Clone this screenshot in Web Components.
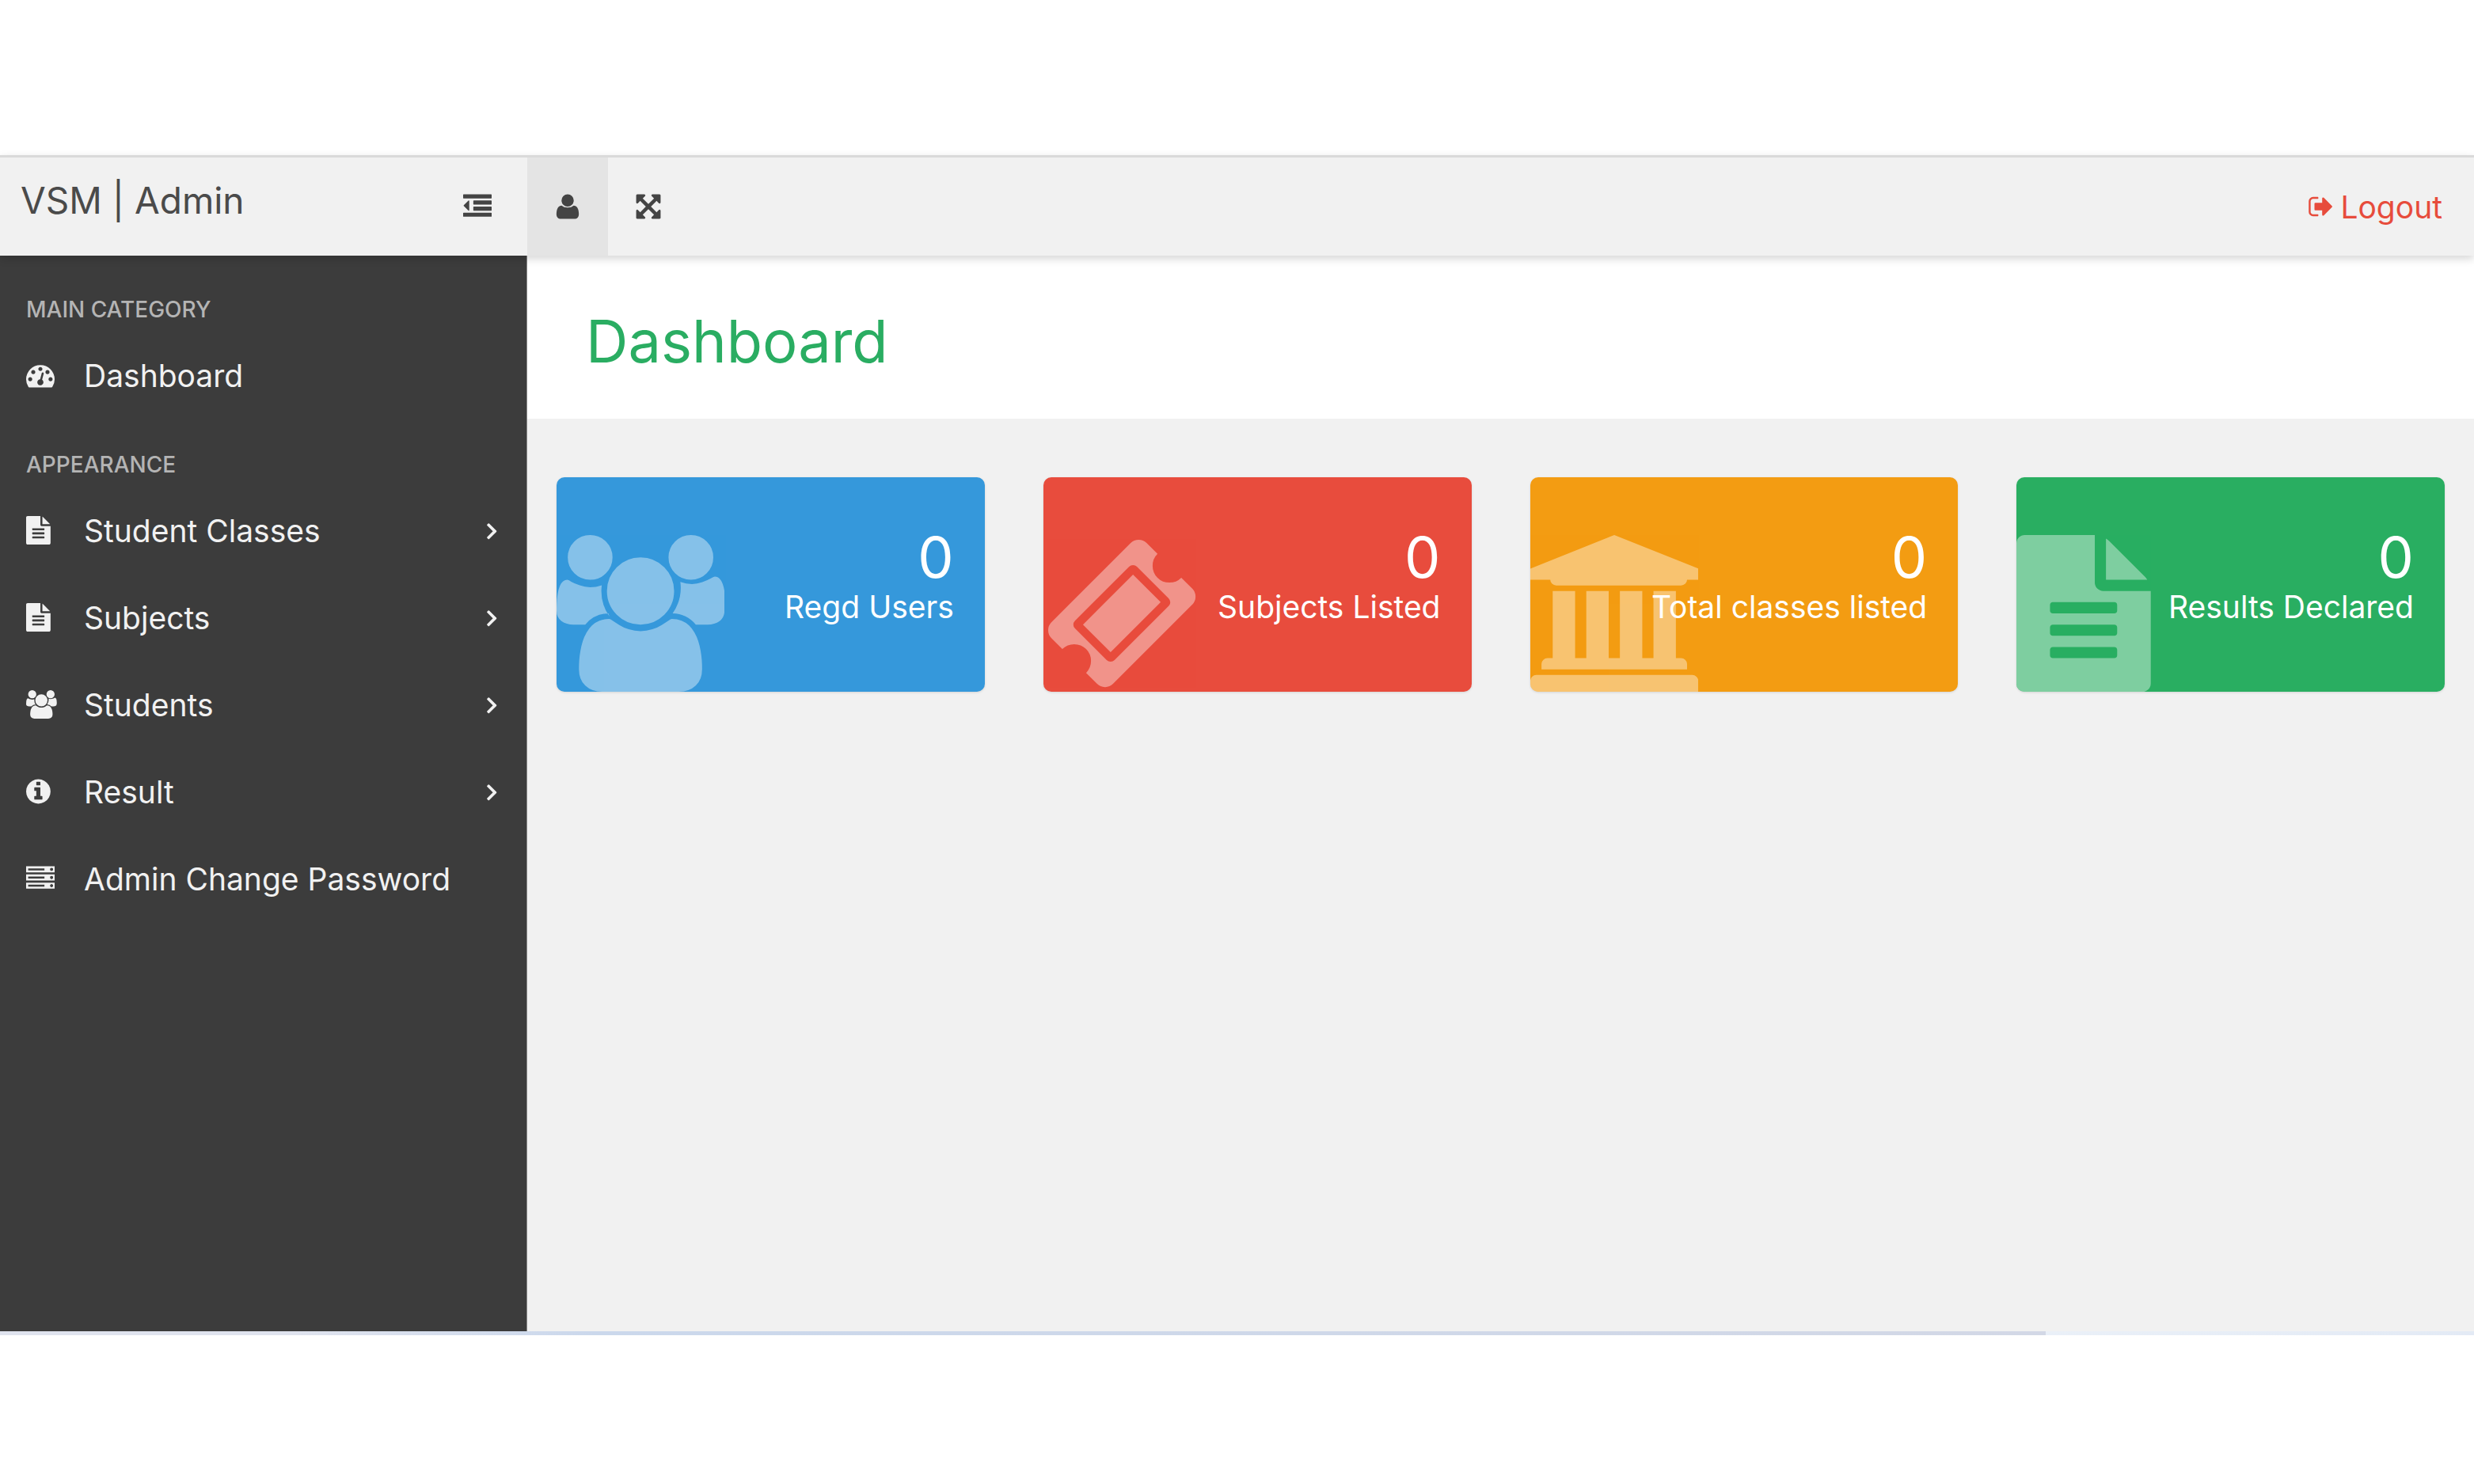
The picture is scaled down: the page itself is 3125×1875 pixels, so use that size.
<!DOCTYPE html>
<html lang="en">
<head>
<meta charset="utf-8">
<meta name="viewport" content="width=device-width, initial-scale=1">
<title>VSM | Admin</title>
<style>
  html, body { margin: 0; background: #fff; }
  body { font-family: Inter, "Open Sans", sans-serif; font-size: 39px; color: #444; }
</style>
</head>
<body>
<admin-shell>
  <top-bar slot="header" brand="VSM | Admin"></top-bar>
  <side-nav slot="nav">
    <nav-group label="MAIN CATEGORY">
      <nav-item icon="gauge">Dashboard</nav-item>
    </nav-group>
    <nav-group label="APPEARANCE">
      <nav-item icon="file" expandable>Student Classes</nav-item>
      <nav-item icon="file" expandable>Subjects</nav-item>
      <nav-item icon="users" expandable>Students</nav-item>
      <nav-item icon="info" expandable>Result</nav-item>
      <nav-item icon="server">Admin Change Password</nav-item>
    </nav-group>
  </side-nav>
  <page-title>Dashboard</page-title>
  <stat-grid>
    <stat-card icon="users" value="0" style="--card:#3598db">Regd Users</stat-card>
    <stat-card icon="ticket" value="0" style="--card:#e84c3d">Subjects Listed</stat-card>
    <stat-card icon="bank" value="0" style="--card:#f39c12">Total classes listed</stat-card>
    <stat-card icon="file" value="0" style="--card:#29ae61">Results Declared</stat-card>
  </stat-grid>
</admin-shell>

<script>
const ICONS = {
  users: [1920, "M593 896q-162 5-265 128h-134q-82 0-138-40.5t-56-118.5q0-353 124-353 6 0 43.5 21t97.5 42.5 119 21.5q67 0 133-23-5 37-5 66 0 159 93 293zm1071 637q0 120-73 189.5t-194 69.5h-874q-121 0-194-69.5t-73-189.5q0-53 3.5-103.5t14-109 26.5-108.5 43-97.5 62-81 85.5-53.5 111.5-20q10 0 43 21.5t73 48 107 48 135 21.5 135-21.5 107-48 73-48 43-21.5q61 0 111.5 20t85.5 53.5 62 81 43 97.5 26.5 108.5 14 109 3.5 103.5zm-1024-1277q0 106-75 181t-181 75-181-75-75-181 75-181 181-75 181 75 75 181zm704 384q0 159-112.5 271.5t-271.5 112.5-271.5-112.5-112.5-271.5 112.5-271.5 271.5-112.5 271.5 112.5 112.5 271.5zm576 225q0 78-56 118.5t-138 40.5h-134q-103-123-265-128 93-134 93-293 0-29-5-66 66 23 133 23 59 0 119-21.5t97.5-42.5 43.5-21q124 0 124 353zm-128-609q0 106-75 181t-181 75-181-75-75-181 75-181 181-75 181 75 75 181z"],
  ticket: [1792, "M1024 452l316 316-572 572-316-316zm-211 979l618-618q19-19 19-45t-19-45l-362-362q-18-18-45-18t-45 18l-618 618q-19 19-19 45t19 45l362 362q18 18 45 18t45-18zm889-637l-907 908q-37 37-90.5 37t-90.5-37l-126-126q56-56 56-136t-56-136-136-56-136 56l-125-126q-37-37-37-90.5t37-90.5l907-906q37-37 90.5-37t90.5 37l125 125q-56 56-56 136t56 136 136 56 136-56l126 125q37 37 37 90.5t-37 90.5z"],
  bank: [1920, "M960 0l960 384v128h-128q0 26-20.5 45t-48.5 19h-1426q-28 0-48.5-19t-20.5-45h-228v-128zm-704 640h256v768h128v-768h256v768h128v-768h256v768h128v-768h256v768h59q28 0 48.5 19t20.5 45v64h-1664v-64q0-26 20.5-45t48.5-19h59v-768zm1595 960q28 0 48.5 19t20.5 45v128h-1920v-128q0-26 20.5-45t48.5-19h1782z"],
  file: [1536, "M1468 476q14 14 28 36h-472v-472q22 14 36 28zm-476 164h544v1056q0 40-28 68t-68 28h-1344q-40 0-68-28t-28-68v-1600q0-40 28-68t68-28h800v544q0 40 28 68t68 28zm160 736v-64q0-14-9-23t-23-9h-704q-14 0-23 9t-9 23v64q0 14 9 23t23 9h704q14 0 23-9t9-23zm0-256v-64q0-14-9-23t-23-9h-704q-14 0-23 9t-9 23v64q0 14 9 23t23 9h704q14 0 23-9t9-23zm0-256v-64q0-14-9-23t-23-9h-704q-14 0-23 9t-9 23v64q0 14 9 23t23 9h704q14 0 23-9t9-23z"],
  gauge: [1792, "M384 1152q0-53-37.5-90.5t-90.5-37.5-90.5 37.5-37.5 90.5 37.5 90.5 90.5 37.5 90.5-37.5 37.5-90.5zm192-448q0-53-37.5-90.5t-90.5-37.5-90.5 37.5-37.5 90.5 37.5 90.5 90.5 37.5 90.5-37.5 37.5-90.5zm428 481l101-382q6-26-7.5-48.5t-38.5-29.5-48 6.5-30 39.5l-101 382q-60 5-107 43.5t-63 98.5q-20 77 20 146t117 89 146-20 89-117q16-60-6-117t-72-91zm660-33q0-53-37.5-90.5t-90.5-37.5-90.5 37.5-37.5 90.5 37.5 90.5 90.5 37.5 90.5-37.5 37.5-90.5zm-640-640q0-53-37.5-90.5t-90.5-37.5-90.5 37.5-37.5 90.5 37.5 90.5 90.5 37.5 90.5-37.5 37.5-90.5zm448 192q0-53-37.5-90.5t-90.5-37.5-90.5 37.5-37.5 90.5 37.5 90.5 90.5 37.5 90.5-37.5 37.5-90.5zm320 448q0 261-141 483-19 29-54 29h-1402q-35 0-54-29-141-221-141-483 0-182 71-348t191-286 286-191 348-71 348 71 286 191 191 286 71 348z"],
  info: [1536, "M1024 1376v-160q0-14-9-23t-23-9h-96v-512q0-14-9-23t-23-9h-320q-14 0-23 9t-9 23v160q0 14 9 23t23 9h96v320h-96q-14 0-23 9t-9 23v160q0 14 9 23t23 9h448q14 0 23-9t9-23zm-128-896v-160q0-14-9-23t-23-9h-192q-14 0-23 9t-9 23v160q0 14 9 23t23 9h192q14 0 23-9t9-23zm640 416q0 209-103 385.5t-279.5 279.5-385.5 103-385.5-103-279.5-279.5-103-385.5 103-385.5 279.5-279.5 385.5-103 385.5 103 279.5 279.5 103 385.5z"],
  server: [1792, "M128 1408h1024v-128h-1024v128zm0-512h1024v-128h-1024v128zm1568 448q0-40-28-68t-68-28-68 28-28 68 28 68 68 28 68-28 28-68zm-1568-960h1024v-128h-1024v128zm1568 448q0-40-28-68t-68-28-68 28-28 68 28 68 68 28 68-28 28-68zm0-512q0-40-28-68t-68-28-68 28-28 68 28 68 68 28 68-28 28-68zm96 832v384h-1792v-384h1792zm0-512v384h-1792v-384h1792zm0-512v384h-1792v-384h1792z"],
  user: [1792, "M1600 1399q0 109-62.5 187t-150.5 78h-982q-88 0-150.5-78t-62.5-187q0-85 8.5-160.5t31.5-152 58.5-131 94-89 134.5-34.5q131 128 377 128t377-128q76 0 134.5 34.5t94 89 58.5 131 31.5 152 8.5 160.5zm-320-887q0 159-112.5 271.5t-271.5 112.5-271.5-112.5-112.5-271.5 112.5-271.5 271.5-112.5 271.5 112.5 112.5 271.5z"],
  expand: [1792, "M1411 541l-355 355 355 355 144-144q29-31 70-14 39 17 39 59v448q0 26-19 45t-45 19h-448q-42 0-59-40-17-39 14-69l144-144-355-355-355 355 144 144q31 30 14 69-17 40-59 40h-448q-26 0-45-19t-19-45v-448q0-42 40-59 39-17 69 14l144 144 355-355-355-355-144 144q-19 19-45 19-12 0-24-5-40-17-40-59v-448q0-26 19-45t45-19h448q42 0 59 40 17 39-14 69l-144 144 355 355 355-355-144-144q-31-30-14-69 17-40 59-40h448q26 0 45 19t19 45v448q0 42-39 59-13 5-25 5-26 0-45-19z"],
  outdent: [1792, "M384 544v576q0 13-9.5 22.5t-22.5 9.5q-14 0-23-9l-288-288q-9-9-9-23t9-23l288-288q9-9 23-9 13 0 22.5 9.5t9.5 22.5zm1408 768v192q0 13-9.5 22.5t-22.5 9.5h-1728q-13 0-22.5-9.5t-9.5-22.5v-192q0-13 9.5-22.5t22.5-9.5h1728q13 0 22.5 9.5t9.5 22.5zm0-384v192q0 13-9.5 22.5t-22.5 9.5h-1088q-13 0-22.5-9.5t-9.5-22.5v-192q0-13 9.5-22.5t22.5-9.5h1088q13 0 22.5 9.5t9.5 22.5zm0-384v192q0 13-9.5 22.5t-22.5 9.5h-1088q-13 0-22.5-9.5t-9.5-22.5v-192q0-13 9.5-22.5t22.5-9.5h1088q13 0 22.5 9.5t9.5 22.5zm0-384v192q0 13-9.5 22.5t-22.5 9.5h-1728q-13 0-22.5-9.5t-9.5-22.5v-192q0-13 9.5-22.5t22.5-9.5h1728q13 0 22.5 9.5t9.5 22.5z"],
  signout: [1664, "M704 1440q0 4 1 20t.5 26.5-3 23.5-10 19.5-20.5 6.5h-320q-119 0-203.5-84.5t-84.5-203.5v-704q0-119 84.5-203.5t203.5-84.5h320q13 0 22.5 9.5t9.5 22.5q0 4 1 20t.5 26.5-3 23.5-10 19.5-20.5 6.5h-320q-66 0-113 47t-47 113v704q0 66 47 113t113 47h312l11.5 1 11.5 3 8 5.5 7 9 2 13.5zm928-544q0 26-19 45l-544 544q-19 19-45 19t-45-19-19-45v-288h-448q-26 0-45-19t-19-45v-384q0-26 19-45t45-19h448v-288q0-26 19-45t45-19 45 19l544 544q19 19 19 45z"],
  chevron: [640, "M613 960q0 20-14 34l-452 452q-14 14-34 14t-34-14l-60-60q-14-14-14-34t14-34l358-358-358-358q-14-14-14-34t14-34l60-60q14-14 34-14t34 14l452 452q14 14 14 34z"]
};

/* Base class: renders html() into an open shadow root. */
class Part extends HTMLElement {
  connectedCallback() {
    if (this.shadowRoot) return;
    this.attachShadow({ mode: "open" }).innerHTML = this.html();
  }
}

customElements.define("ui-icon", class extends Part {
  html() {
    const [w, d] = ICONS[this.getAttribute("name")];
    return `<style>
      :host { display: inline-block; flex: none; line-height: 0; }
      svg { display: block; height: var(--icon-size, 36px); width: auto; fill: currentColor; }
    </style><svg viewBox="0 0 ${w} 1792" aria-hidden="true"><path d="${d}"/></svg>`;
  }
});

customElements.define("admin-shell", class extends Part {
  html() {
    return `<style>
      :host { display: flex; flex-direction: column; box-sizing: border-box; min-height: 100vh; padding: 196px 0 188px; }
      .body { flex: 1; display: grid; grid-template-columns: 666px minmax(0, 1fr); }
      main { background: #f1f1f1; }
      .edge { height: 5px; background: linear-gradient(90deg, #dfe3ee 0 12%, #cbd8ec 24%, #d3d8e6 82.7%, #eaf0f8 82.7%, #e3eaf5); }
    </style>
    <slot name="header"></slot>
    <div class="body"><slot name="nav"></slot><main><slot></slot></main></div>
    <div class="edge"></div>`;
  }
});

customElements.define("top-bar", class extends Part {
  html() {
    return `<style>
      :host { display: block; position: relative; z-index: 1; }
      header { display: flex; height: 124px; border-top: 3px solid #dadada; background: #f1f1f1; box-shadow: 0 4px 10px rgba(0,0,0,.16); }
      .brand { box-sizing: border-box; width: 666px; padding: 0 45px 0 26px; display: flex; justify-content: space-between; }
      .name { font-size: 46px; line-height: 108px; color: #4a4a4a; white-space: nowrap; }
      button { border: 0; margin: 0; padding: 0; background: none; color: #444; cursor: pointer; display: flex; align-items: center; justify-content: center; }
      .tool { width: 102px; }
      .tool.active { background: #e4e4e4; }
      .menu { width: 36px; }
      a { margin-left: auto; padding-right: 40px; display: flex; align-items: center; gap: 10px; color: #e74c3c; text-decoration: none; --icon-size: 34px; }
    </style>
    <header>
      <div class="brand"><span class="name">${this.getAttribute("brand")}</span>
        <button class="menu" aria-label="Toggle menu"><ui-icon name="outdent"></ui-icon></button></div>
      <button class="tool active" aria-label="Profile"><ui-icon name="user"></ui-icon></button>
      <button class="tool" aria-label="Full screen"><ui-icon name="expand"></ui-icon></button>
      <a href="#"><ui-icon name="signout"></ui-icon><span>Logout</span></a>
    </header>`;
  }
});

customElements.define("side-nav", class extends Part {
  html() {
    return `<style>
      :host { display: block; background: #3c3c3c; border-right: 1px solid #8a8a8a; }
      nav { padding-top: 10px; }
    </style><nav><slot></slot></nav>`;
  }
});

customElements.define("nav-group", class extends Part {
  html() {
    return `<style>
      :host { display: block; }
      h2 { margin: 0; padding: 40px 33px 10px; font-size: 28px; line-height: 36px; font-weight: 500; color: #b4b4b4; }
    </style><h2>${this.getAttribute("label")}</h2><slot></slot>`;
  }
});

customElements.define("nav-item", class extends Part {
  html() {
    return `<style>
      :host { display: block; }
      a { display: flex; align-items: center; height: 110px; padding: 0 37px 0 33px; color: #f1f1f1; text-decoration: none; white-space: nowrap; }
      .icon { display: flex; width: 73px; flex: none; }
      .label { flex: 1; }
    </style>
    <a href="#"><span class="icon"><ui-icon name="${this.getAttribute("icon")}"></ui-icon></span>
      <span class="label"><slot></slot></span>
      ${this.hasAttribute("expandable") ? '<ui-icon name="chevron"></ui-icon>' : ""}</a>`;
  }
});

customElements.define("page-title", class extends Part {
  html() {
    return `<style>
      :host { display: block; background: #fff; padding: 58px 74px 48px; }
      h1 { margin: 0; font-size: 74px; line-height: 100px; font-weight: 400; color: #2aad62; }
    </style><h1><slot></slot></h1>`;
  }
});

customElements.define("stat-grid", class extends Part {
  html() {
    return `<style>
      :host { display: grid; grid-template-columns: repeat(4, minmax(0, 1fr)); gap: 74px; padding: 74px 37px; }
    </style><slot></slot>`;
  }
});

customElements.define("stat-card", class extends Part {
  html() {
    return `<style>
      :host { display: block; }
      a { position: relative; display: flex; flex-direction: column; align-items: flex-end; box-sizing: border-box; height: 271px; padding: 60px 39px 0; overflow: hidden; border-radius: 10px; background: var(--card); color: #fff; text-decoration: none; white-space: nowrap; box-shadow: 0 1px 3px rgba(0,0,0,.12); }
      ui-icon { position: absolute; left: 0; bottom: 0; opacity: .4; --icon-size: 198px; }
      .value { position: relative; font-size: 72px; line-height: 82px; }
      .label { position: relative; line-height: 44px; }
    </style>
    <a href="#"><ui-icon name="${this.getAttribute("icon")}"></ui-icon>
      <span class="value">${this.getAttribute("value")}</span>
      <span class="label"><slot></slot></span></a>`;
  }
});
</script>
</body>
</html>
